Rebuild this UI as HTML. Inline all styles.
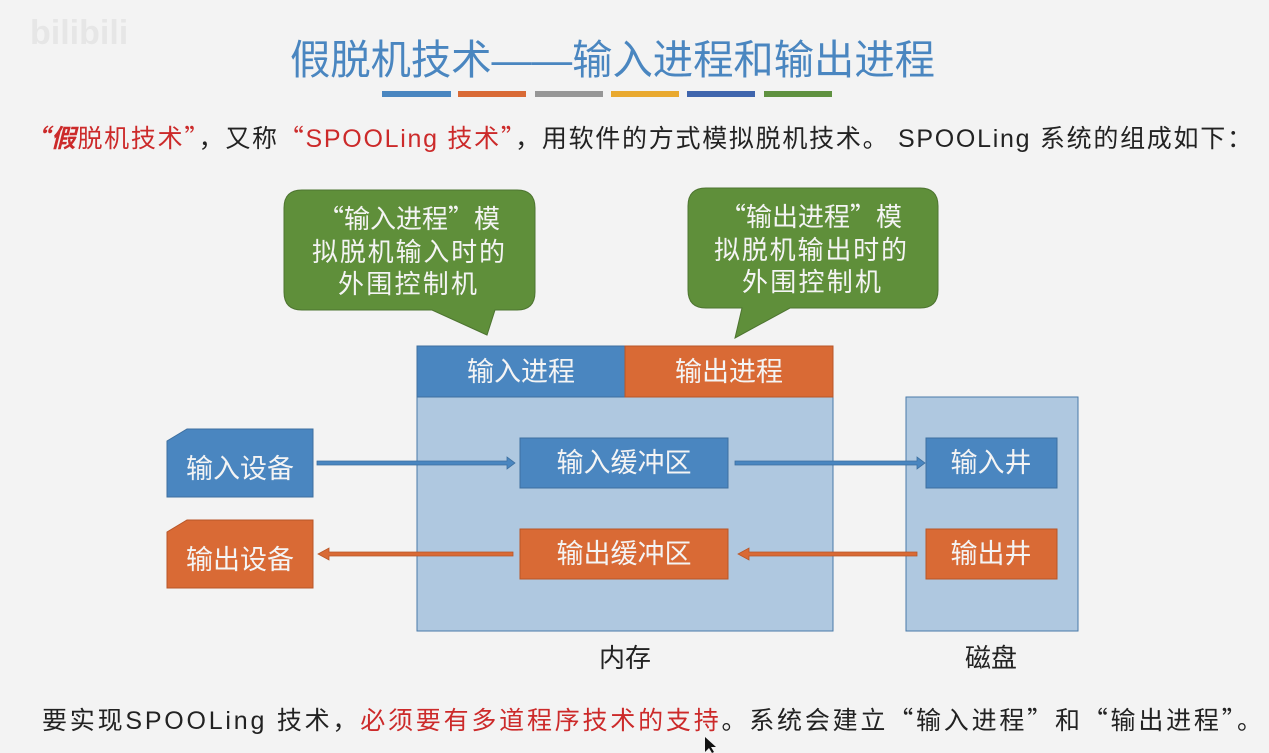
<!DOCTYPE html>
<html><head><meta charset="utf-8"><style>
html,body{margin:0;padding:0;background:#f3f3f3;width:1269px;height:753px;overflow:hidden}
svg{display:block}
text{font-family:"Liberation Sans","Noto Sans CJK SC",sans-serif}
.q{font-family:"Noto Sans CJK SC",sans-serif}
</style></head><body>
<svg width="1269" height="753" viewBox="0 0 1269 753">
<rect width="1269" height="753" fill="#f3f3f3"/>
<text x="30" y="44" font-size="34" fill="#e6e6e6" font-weight="bold">bilibili</text>
<text x="290" y="74" font-size="41" fill="#4a86c0" textLength="645" lengthAdjust="spacingAndGlyphs">假脱机技术——输入进程和输出进程</text>
<rect x="382" y="91" width="69" height="6" fill="#4a86c0"/>
<rect x="458" y="91" width="68" height="6" fill="#d96a35"/>
<rect x="535" y="91" width="68" height="6" fill="#969696"/>
<rect x="611" y="91" width="68" height="6" fill="#e9a92f"/>
<rect x="687" y="91" width="68" height="6" fill="#3f65ad"/>
<rect x="764" y="91" width="68" height="6" fill="#5f9140"/>
<text x="24" y="147" font-size="25" fill="#222" textLength="1228" lengthAdjust="spacing"><tspan fill="#cc2a2a" font-style="italic" font-weight="bold" class="q">“假</tspan><tspan fill="#cc2a2a">脱机技术</tspan><tspan fill="#cc2a2a" class="q">”</tspan><tspan class="q">，</tspan>又称<tspan fill="#cc2a2a" class="q">“</tspan><tspan fill="#cc2a2a">SPOOLing 技术</tspan><tspan fill="#cc2a2a" class="q">”</tspan><tspan class="q">，</tspan>用软件的方式模拟脱机技术。 SPOOLing 系统的组成如下<tspan class="q">：</tspan></text>
<!-- bubbles -->
<path d="M302 190 H517 Q535 190 535 208 V292 Q535 310 517 310 H495 L487 335 L432 310 H302 Q284 310 284 292 V208 Q284 190 302 190Z" fill="#5f8f3a" stroke="#4d7430" stroke-width="1"/>
<text font-size="26" fill="#f4f4f4"><tspan x="318" y="228" class="q">“</tspan><tspan>输入进程</tspan><tspan class="q">”</tspan><tspan>模</tspan></text>
<text x="312" y="261" font-size="26" fill="#f4f4f4" textLength="193">拟脱机输入时的</text>
<text x="338" y="293" font-size="26" fill="#f4f4f4" textLength="139">外围控制机</text>
<path d="M706 188 H920 Q938 188 938 206 V290 Q938 308 920 308 H790 L735 338 L742 308 H706 Q688 308 688 290 V206 Q688 188 706 188Z" fill="#5f8f3a" stroke="#4d7430" stroke-width="1"/>
<text font-size="26" fill="#f4f4f4"><tspan x="720" y="226" class="q">“</tspan><tspan>输出进程</tspan><tspan class="q">”</tspan><tspan>模</tspan></text>
<text x="714" y="259" font-size="26" fill="#f4f4f4" textLength="193">拟脱机输出时的</text>
<text x="742" y="291" font-size="26" fill="#f4f4f4" textLength="139">外围控制机</text>
<!-- memory -->
<rect x="417" y="397" width="416" height="234" fill="#afc8e0" stroke="#4a7aa8"/>
<rect x="417" y="346" width="208" height="51" fill="#4a86c0" stroke="#3d6f9f"/>
<rect x="625" y="346" width="208" height="51" fill="#d96a35" stroke="#b85628"/>
<text x="521" y="381" font-size="27" fill="#f4f4f4" text-anchor="middle">输入进程</text>
<text x="729" y="381" font-size="27" fill="#f4f4f4" text-anchor="middle">输出进程</text>
<rect x="520" y="438" width="208" height="50" fill="#4a86c0" stroke="#3d6f9f"/>
<text x="624" y="472" font-size="27" fill="#f4f4f4" text-anchor="middle">输入缓冲区</text>
<rect x="520" y="529" width="208" height="50" fill="#d96a35" stroke="#b85628"/>
<text x="624" y="563" font-size="27" fill="#f4f4f4" text-anchor="middle">输出缓冲区</text>
<text x="625" y="667" font-size="26" fill="#222" text-anchor="middle">内存</text>
<!-- disk -->
<rect x="906" y="397" width="172" height="234" fill="#afc8e0" stroke="#4a7aa8"/>
<rect x="926" y="438" width="131" height="50" fill="#4a86c0" stroke="#3d6f9f"/>
<text x="991" y="472" font-size="27" fill="#f4f4f4" text-anchor="middle">输入井</text>
<rect x="926" y="529" width="131" height="50" fill="#d96a35" stroke="#b85628"/>
<text x="991" y="563" font-size="27" fill="#f4f4f4" text-anchor="middle">输出井</text>
<text x="991" y="667" font-size="26" fill="#222" text-anchor="middle">磁盘</text>
<!-- devices -->
<path d="M187 429 H313 V497 H167 V441Z" fill="#4a86c0" stroke="#3d6f9f"/>
<text x="240" y="478" font-size="27" fill="#f4f4f4" text-anchor="middle">输入设备</text>
<path d="M187 520 H313 V588 H167 V532Z" fill="#d96a35" stroke="#b85628"/>
<text x="240" y="569" font-size="27" fill="#f4f4f4" text-anchor="middle">输出设备</text>
<!-- arrows -->
<path d="M317 461 H507 V457 L515 463 L507 469 V465 H317Z" fill="#4a86c0" stroke="#3d6f9f" stroke-width="0.8"/>
<path d="M735 461 H917 V457 L925 463 L917 469 V465 H735Z" fill="#4a86c0" stroke="#3d6f9f" stroke-width="0.8"/>
<path d="M513 552 H329 V548 L318 554 L329 560 V556 H513Z" fill="#d96a35" stroke="#b85628" stroke-width="0.8"/>
<path d="M917 552 H749 V548 L738 554 L749 560 V556 H917Z" fill="#d96a35" stroke="#b85628" stroke-width="0.8"/>
<text x="42" y="729" font-size="25" fill="#222" textLength="1220" lengthAdjust="spacing">要实现SPOOLing 技术<tspan class="q">，</tspan><tspan fill="#cc2a2a">必须要有多道程序技术的支持</tspan><tspan class="q">。</tspan>系统会建立<tspan class="q">“</tspan>输入进程<tspan class="q">”</tspan>和<tspan class="q">“</tspan>输出进程<tspan class="q">”。</tspan></text>
<path d="M705 737 L705 752 L709 748 L712 753 L714 752 L711 747 L716 747Z" fill="#111"/>
</svg>
</body></html>
